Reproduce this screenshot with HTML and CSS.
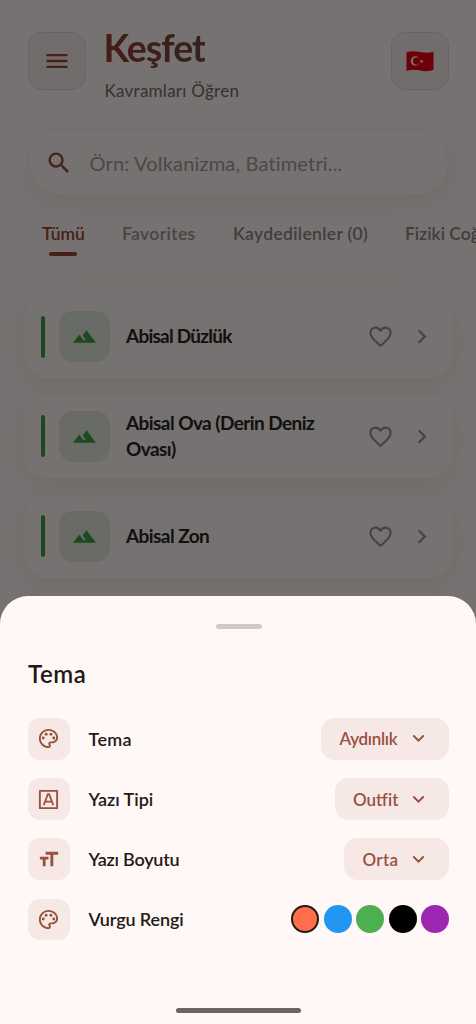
FILE: index.html
```html
<!DOCTYPE html>
<html lang="tr">
<head>
<meta charset="utf-8">
<title>Keşfet</title>
<link rel="stylesheet" href="styles.css">
</head>
<body>
<svg class="defs" width="0" height="0">
  <symbol id="land" viewBox="0 0 24 24"><path d="M14 6l-3.75 5 2.85 3.8-1.6 1.2C9.81 13.75 7 10 7 10l-6 8h22z"/></symbol>
  <symbol id="heart" viewBox="0 0 24 24"><path d="M12 20.200C6.200 15.200 3 12.300 3 8.600 3 6 5 4.100 7.500 4.100c1.900 0 3.600 1.100 4.500 2.900.9-1.800 2.600-2.900 4.500-2.900C19 4.100 21 6 21 8.600c0 3.700-3.200 6.600-9 11.600z" fill="none" stroke="currentColor" stroke-width="1.900" stroke-linejoin="round"/></symbol>
  <symbol id="right" viewBox="0 0 24 24"><path d="M9 6.700l5.300 5.300L9 17.300" fill="none" stroke="currentColor" stroke-width="2.200" stroke-linecap="round"/></symbol>
  <symbol id="down" viewBox="0 0 24 24"><path d="M6.700 9.200l5.300 5.300 5.300-5.300" fill="none" stroke="currentColor" stroke-width="2.200" stroke-linecap="round"/></symbol>
  <symbol id="palette" viewBox="0 0 24 24"><path d="M12 22C6.490 22 2 17.510 2 12S6.490 2 12 2s10 4.040 10 9c0 3.310-2.690 6-6 6h-1.770c-.28 0-.5.22-.5.5 0 .12.05.23.13.33.41.47.64 1.060.64 1.670A2.500 2.500 0 0 1 12 22zm0-18c-4.410 0-8 3.590-8 8s3.590 8 8 8c.28 0 .5-.22.5-.5a.54.54 0 0 0-.14-.35c-.41-.46-.63-1.050-.63-1.650a2.500 2.500 0 0 1 2.500-2.500H16c2.210 0 4-1.790 4-4 0-3.860-3.590-7-8-7z"/><circle cx="6.500" cy="11.500" r="1.500"/><circle cx="9.500" cy="7.500" r="1.500"/><circle cx="14.500" cy="7.500" r="1.500"/><circle cx="17.500" cy="11.500" r="1.500"/></symbol>
</svg>
<div class="screen">
  <header class="top">
    <div class="square"><svg class="i28" viewBox="0 0 24 24"><path d="M3 18h18v-2H3v2zm0-5h18v-2H3v2zm0-7v2h18V6H3z"/></svg></div>
    <div class="heading">
      <h1 class="title">Keşfet</h1>
      <p class="subtitle">Kavramları Öğren</p>
    </div>
    <div class="square">
      <svg class="flag" viewBox="0 0 28 21"><path d="M.5 1.300Q7-.7 14 1T27.500.8V19Q21 21 14 19.500T.5 20z" fill="#f00014"/><circle cx="9.500" cy="10" r="4.700" fill="#fff"/><circle cx="10.800" cy="10" r="3.800" fill="#f00014"/><path d="M13.200 10.300l1.600-.5V8.100l1 1.300 1.600-.5-1 1.400 1 1.400-1.600-.5-1 1.300v-1.700z" fill="#fff"/></svg>
    </div>
  </header>
  <div class="search">
    <svg class="i28" viewBox="0 0 24 24"><path d="M15.500 14h-.79l-.28-.27A6.471 6.471 0 0 0 16 9.500 6.500 6.500 0 1 0 9.500 16c1.610 0 3.090-.59 4.230-1.570l.27.28v.79l5 4.990L20.490 19l-4.990-5zm-6 0C7.010 14 5 11.990 5 9.500S7.010 5 9.500 5 14 7.010 14 9.500 11.990 14 9.500 14z"/></svg>
    <span class="placeholder">Örn: Volkanizma, Batimetri...</span>
  </div>
  <nav class="tabs">
    <span class="tab t1">Tümü</span>
    <span class="tab t2">Favorites</span>
    <span class="tab t3">Kaydedilenler (0)</span>
    <span class="tab t4">Fiziki Coğrafya</span>
  </nav>
  <main class="cards">
    <article class="card"><i class="bar"></i><div class="thumb"><svg><use href="#land"/></svg></div><span class="name n1">Abisal Düzlük</span><svg class="heart"><use href="#heart"/></svg><svg class="go"><use href="#right"/></svg></article>
    <article class="card"><i class="bar"></i><div class="thumb"><svg><use href="#land"/></svg></div><span class="name">Abisal Ova (Derin Deniz<br>Ovası)</span><svg class="heart"><use href="#heart"/></svg><svg class="go"><use href="#right"/></svg></article>
    <article class="card"><i class="bar"></i><div class="thumb"><svg><use href="#land"/></svg></div><span class="name">Abisal Zon</span><svg class="heart"><use href="#heart"/></svg><svg class="go"><use href="#right"/></svg></article>
    <article class="card"></article>
  </main>
</div>
<div class="scrim"></div>
<section class="sheet">
  <div class="handle"></div>
  <h2 class="sheet-title">Tema</h2>
  <div class="rows">
    <div class="row"><div class="tile"><svg><use href="#palette"/></svg></div><span class="label l1">Tema</span><div class="pill p1"><span>Aydınlık</span><svg><use href="#down"/></svg></div></div>
    <div class="row"><div class="tile"><svg viewBox="0 0 24 24"><path d="M3 3h18v18H3z" fill="none" stroke="currentColor" stroke-width="1.900" stroke-linejoin="round"/><path d="M7 18L11.300 6.500h1.400L17 18M8.600 14.300h6.800" fill="none" stroke="currentColor" stroke-width="1.800"/></svg></div><span class="label">Yazı Tipi</span><div class="pill p2"><span>Outfit</span><svg><use href="#down"/></svg></div></div>
    <div class="row"><div class="tile"><svg viewBox="0 0 24 24"><path d="M9 4v3h5v12h3V7h5V4H9zm-6 8h3v7h3v-7h3V9H3v3z"/></svg></div><span class="label l3">Yazı Boyutu</span><div class="pill p3"><span>Orta</span><svg><use href="#down"/></svg></div></div>
    <div class="row"><div class="tile"><svg><use href="#palette"/></svg></div><span class="label l4">Vurgu Rengi</span><div class="dots"><i class="dot coral"></i><i class="dot blue"></i><i class="dot green"></i><i class="dot black"></i><i class="dot purple"></i></div></div>
  </div>
  <div class="home"></div>
</section>
</body>
</html>
```
FILE: styles.css
```css
* { box-sizing: border-box; margin: 0; padding: 0; }
body { width: 476px; height: 1024px; position: relative; overflow: hidden; background: #fff8f6; font-family: Lato, "Open Sans", sans-serif; color: #231917; }
svg { fill: currentColor; flex: none; display: block; }
.defs { position: absolute; }
.screen { height: 1024px; overflow: hidden; padding-top: 32px; }
.top { display: flex; height: 97px; padding: 0 27px 0 28px; align-items: flex-start; }
.square { width: 58px; height: 58px; border-radius: 14px; border: 1px solid #e2dad8; background: #f5eeec; display: flex; align-items: center; justify-content: center; color: #9c4636; flex: none; }
.i28 { width: 28px; height: 28px; }
.flag { width: 28px; height: 21px; }
.heading { flex: 1; padding-left: 18.500px; white-space: nowrap; }
.title { width: max-content; font-size: 37.500px; line-height: 44px; font-weight: 700; letter-spacing: -1px; margin: -6px 0 0 -1px; color: transparent; background: linear-gradient(90deg, #96402f, #744a40); background-clip: text; -webkit-background-clip: text; }
.subtitle { font-size: 17px; line-height: 22px; margin-top: 9.500px; color: #706d6c; letter-spacing: .27px; }
.search { margin: 0 27px 0 28px; height: 67px; border-radius: 34px; border: 1px solid #f5edeb; background: #fff8f6; box-shadow: 0 8px 28px rgba(60,30,20,.06); display: flex; align-items: center; padding-left: 16px; color: #9c4636; }
.placeholder { margin-left: 16.500px; font-size: 20px; color: #a39d9b; letter-spacing: .18px; white-space: nowrap; }
.tabs { height: 99px; padding: 26px 0 0 42px; display: flex; white-space: nowrap; font-weight: 600; font-size: 17.500px; line-height: 24px; color: #8d8785; }
.tab { flex: none; }
.t1 { width: 80px; color: #9c4636; }
.t1::after { content: ""; display: block; width: 28px; height: 4px; border-radius: 2px; background: #9c4636; margin: 5.500px 0 0 7px; }
.t2 { width: 111px; color: #9c9694; letter-spacing: .38px; }
.t3 { width: 172px; letter-spacing: .33px; }
.cards { padding: 0 24px; display: flex; flex-direction: column; gap: 16.500px; }
.card { height: 83.300px; flex: none; border-radius: 23px; background: #fff8f6; box-shadow: 0 5px 20px rgba(76,145,80,.12); display: flex; align-items: center; padding-left: 16.500px; }
.bar { width: 4.500px; height: 42px; border-radius: 3px; background: #43a047; }
.thumb { width: 51px; height: 51px; border-radius: 14px; margin-left: 14px; background: #e3e9df; color: #43a047; display: flex; align-items: center; justify-content: center; }
.thumb svg { width: 25px; height: 25px; }
.name { width: 241px; margin-left: 16px; font-size: 19px; line-height: 26.500px; font-weight: 700; letter-spacing: -.57px; color: #292524; white-space: nowrap; }
.n1 { letter-spacing: -.76px; }
.heart { width: 27px; height: 27px; color: #969190; }
.go { width: 25px; height: 25px; margin-left: 16px; color: #969190; }
.scrim { position: absolute; inset: 0; background: rgba(0,0,0,.54); }
.sheet { position: absolute; left: 0; right: 0; bottom: 0; height: 428px; background: #fff8f6; border-radius: 28px 28px 0 0; padding: 28px 27px 0 28px; }
.handle { width: 46px; height: 5px; border-radius: 3px; background: #d3c8c6; margin: 0 auto; }
.sheet-title { margin-top: 30px; font-size: 24px; line-height: 30px; font-weight: 600; letter-spacing: .6px; }
.rows { display: flex; flex-direction: column; gap: 18.500px; margin-top: 29px; }
.row { display: flex; align-items: center; height: 41.700px; white-space: nowrap; }
.tile { width: 41.500px; height: 41.500px; border-radius: 12px; background: #f5e8e5; color: #98503f; display: flex; align-items: center; justify-content: center; flex: none; }
.tile svg { width: 23px; height: 23px; }
.label { margin-left: 19px; font-size: 18px; font-weight: 600; flex: 1; }
.l1 { letter-spacing: .35px; }
.l3 { letter-spacing: -.22px; }
.l4 { letter-spacing: -.12px; }
.pill { height: 41.700px; border-radius: 14px; background: #f5e8e5; color: #98503f; padding: 0 20px 0 18.500px; display: flex; align-items: center; justify-content: space-between; font-size: 17px; font-weight: 600; }
.pill svg { width: 21px; height: 21px; }
.p1 { width: 128px; letter-spacing: -.3px; }
.p2 { width: 114.500px; }
.p3 { width: 105px; letter-spacing: .35px; }
.dots { display: flex; gap: 4.500px; }
.dot { width: 28px; height: 28px; border-radius: 50%; }
.coral { background: #ff6e4a; border: 2px solid #231917; }
.blue { background: #2196f3; }
.green { background: #4caf50; }
.black { background: #000; }
.purple { background: #9c27b0; }
.home { position: absolute; left: 175.500px; bottom: 11.500px; width: 125.500px; height: 4.500px; border-radius: 3px; background: #6a6463; }
```
